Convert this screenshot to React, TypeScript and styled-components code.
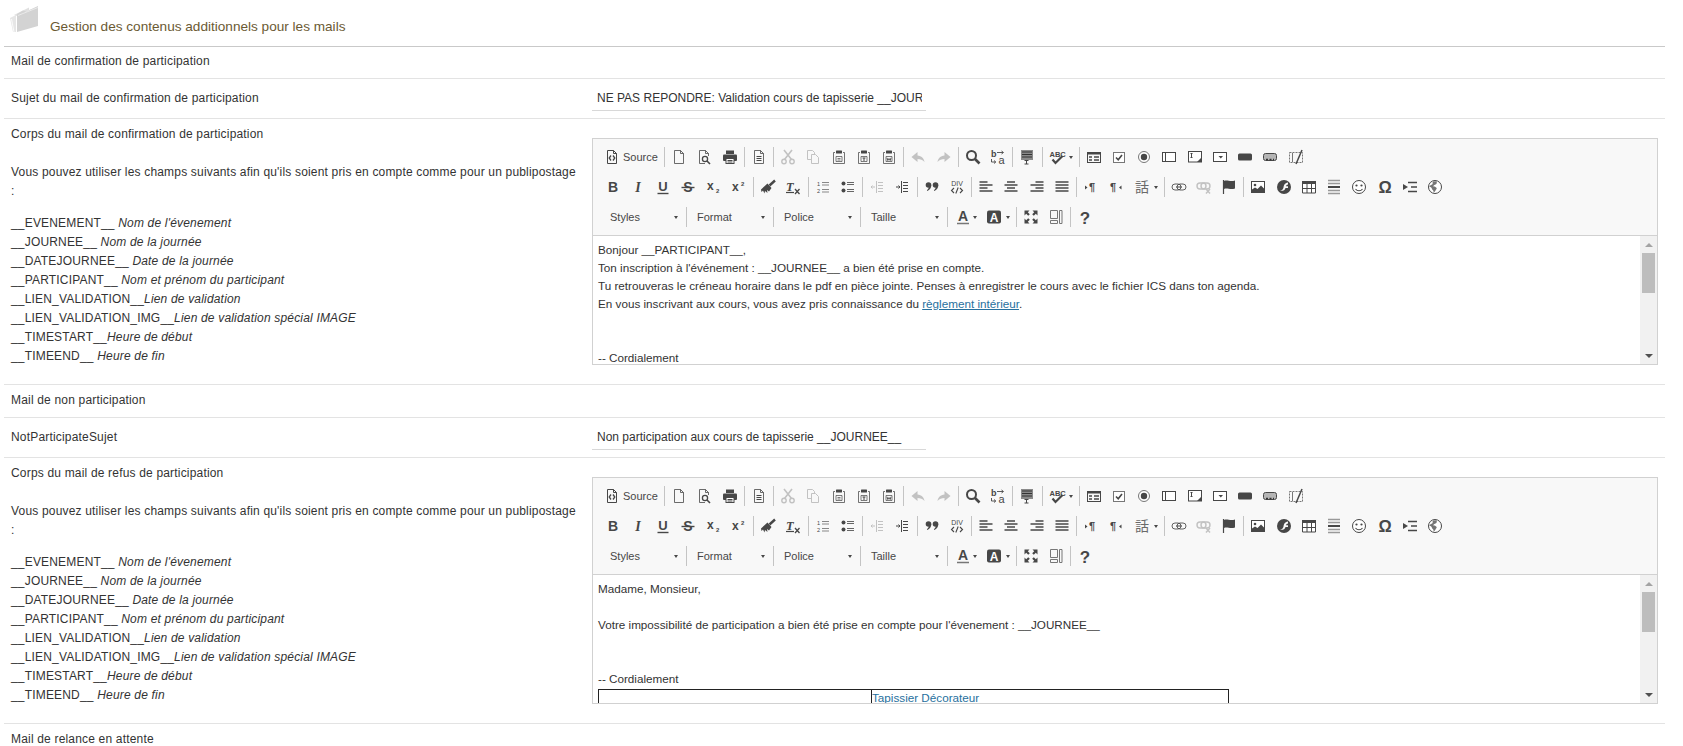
import * as React from 'react';
import styled, { createGlobalStyle } from 'styled-components';

const GlobalStyle = createGlobalStyle`
  html, body {
    margin: 0;
    padding: 0;
    background: #fff;
    overflow: hidden;
  }
  body {
    font-family: "Liberation Sans", Arial, sans-serif;
    font-size: 12px;
    color: #333;
  }
`;

const Page = styled.div`
  height: 746px;
  overflow: hidden;
  padding: 0 18px 0 4px;
`;
const Header = styled.div`
  display: flex;
  align-items: flex-start;
  height: 46px;
  border-bottom: 1px solid #c9c9c9;
`;
const HeaderIcon = styled.svg`
  width: 30px;
  height: 30px;
  margin: 4px 0 0 5px;
  flex: none;
`;
const Title = styled.h1`
  margin: 18px 0 0 11px;
  font-size: 13.6px;
  line-height: 18px;
  font-weight: 400;
  color: #6b5a33;
`;
const SectionRow = styled.div<{ $tall?: boolean }>`
  height: ${({ $tall }) => ($tall ? '32px' : '31px')};
  padding-left: 7px;
  line-height: ${({ $tall }) => ($tall ? '31px' : '29px')};
  letter-spacing: 0.18px;
  border-bottom: 1px solid #e3e3e3;
`;
const FieldRow = styled.div`
  display: grid;
  grid-template-columns: 588px 1fr;
  border-bottom: 1px solid #e3e3e3;
`;
const InlineLabel = styled.div`
  align-self: center;
  padding-left: 7px;
  line-height: 19px;
  letter-spacing: 0.18px;
`;
const InputCell = styled.div`
  padding: 7px 0;
`;
const SubjectInput = styled.input`
  display: block;
  box-sizing: border-box;
  width: 334px;
  height: 25px;
  padding: 0 4px 0 5px;
  border: 0;
  border-bottom: 1px solid #d8d8d8;
  outline: none;
  background: #fff;
  font: 12px "Liberation Sans", Arial, sans-serif;
  color: #333;
`;
const LabelBlock = styled.div`
  padding: 6px 14px 18px 7px;
  line-height: 19px;
  letter-spacing: 0.18px;
`;
const Paragraph = styled.p`
  margin: 19px 0 0;
`;
const TokenList = styled.ul`
  list-style: none;
  margin: 13px 0 0;
  padding: 0;
  color: #333;
`;
const TokenHint = styled.em`
  font-style: italic;
`;
const EditorCell = styled.div`
  padding: 19px 7px 19px 0;
`;
const Editor = styled.div`
  border: 1px solid #d1d1d1;
  height: 225px;
  display: flex;
  flex-direction: column;
`;
const Toolbar = styled.div`
  flex: none;
  box-sizing: border-box;
  height: 97px;
  padding: 3px 0 3px 7px;
  background: #f8f8f8;
  border-bottom: 1px solid #d1d1d1;
`;
const ToolRow = styled.div`
  display: flex;
  align-items: center;
  height: 30px;
  color: #474747;
`;
const ToolButton = styled.div<{ $off?: boolean; $arrow?: boolean }>`
  display: flex;
  align-items: center;
  justify-content: ${({ $arrow }) => ($arrow ? 'flex-start' : 'center')};
  gap: 4px;
  box-sizing: border-box;
  flex: none;
  width: ${({ $arrow }) => ($arrow ? '33px' : '25.25px')};
  padding-left: ${({ $arrow }) => ($arrow ? '5px' : '0')};
  opacity: ${({ $off }) => ($off ? 0.3 : 1)};
`;
const SourceButton = styled.div`
  display: flex;
  align-items: center;
  gap: 3px;
  flex: none;
  box-sizing: border-box;
  width: 62.5px;
  padding-left: 4px;
  font-size: 11px;
`;
const Sep = styled.span<{ $tight?: boolean }>`
  flex: none;
  width: 1px;
  height: 20px;
  margin: ${({ $tight }) => ($tight ? '0' : '0 1.5px')};
  background: #c4c4c4;
`;
const Combo = styled.div`
  display: flex;
  align-items: center;
  justify-content: space-between;
  box-sizing: border-box;
  flex: none;
  width: 86px;
  padding: 0 8px 0 10px;
  font-size: 11px;
`;
const Caret = styled.span`
  flex: none;
  width: 0;
  height: 0;
  border-left: 2.5px solid transparent;
  border-right: 2.5px solid transparent;
  border-top: 3px solid #474747;
`;
const Glyph = styled.svg`
  flex: none;
  display: block;
  width: 16px;
  height: 16px;
  overflow: visible;
  text {
    font-family: "Liberation Sans", Arial, sans-serif;
  }
`;
const EditorBody = styled.div`
  flex: 1;
  min-height: 0;
  display: flex;
`;
const Content = styled.div`
  flex: 1;
  min-width: 0;
  overflow: hidden;
  padding: 5px 0 0 5px;
  font-size: 11.7px;
  line-height: 18px;
`;
const ContentLine = styled.div`
  min-height: 18px;
  white-space: nowrap;
`;
const MailLink = styled.a`
  color: #27709e;
  text-decoration: underline;
`;
const Signature = styled.table`
  border-collapse: collapse;
  width: 631px;
  margin-top: 1px;
  table-layout: fixed;
  td {
    border: 1px solid #222;
    padding: 0;
    height: 40px;
    vertical-align: top;
    line-height: 15px;
  }
  td:first-child {
    width: 272px;
  }
`;
const Scrollbar = styled.div`
  flex: none;
  width: 17px;
  display: flex;
  flex-direction: column;
  background: #f1f1f1;
`;
const ScrollArrow = styled.div<{ $up?: boolean; $muted?: boolean }>`
  flex: none;
  height: 17px;
  display: flex;
  align-items: center;
  justify-content: center;
  margin-top: ${({ $up }) => ($up ? '0' : 'auto')};
  &::before {
    content: '';
    width: 0;
    height: 0;
    border-left: 4px solid transparent;
    border-right: 4px solid transparent;
    ${({ $up, $muted }) =>
      $up
        ? `border-bottom: 4px solid ${$muted ? '#a3a3a3' : '#505050'};`
        : `border-top: 4px solid ${$muted ? '#a3a3a3' : '#505050'};`}
  }
`;
const ScrollThumb = styled.div`
  flex: none;
  height: 40px;
  margin: 0 2px;
  background: #bdbdbd;
`;

const pageDoc = 'M3.5 1.5h6l3 3v10h-9z M9.5 1.5v3h3';
const clip = (
  <>
    <path d="M4 3.5H2.500v11h11v-11H12" fill="none" stroke="currentColor" strokeOpacity="0.75" />
    <rect x="5" y="1.500" width="6" height="3" rx="0.5" fill="currentColor" />
  </>
);

const icons: Record<string, React.ReactNode> = {
  source: (
    <>
      <path d={pageDoc} fill="none" stroke="currentColor" />
      <path d="M7 6.5 5.2 9 7 11.5M9 6.5l1.8 2.5L9 11.5" fill="none" stroke="currentColor" strokeWidth="1.3" />
    </>
  ),
  newpage: <path d={pageDoc} fill="none" stroke="currentColor" strokeOpacity="0.8" />,
  preview: (
    <>
      <path d="M9 14.5H3.5v-13h6l3 3V7 M9.5 1.5v3h3" fill="none" stroke="currentColor" strokeOpacity="0.8" />
      <circle cx="9" cy="10" r="2.6" fill="none" stroke="currentColor" strokeWidth="1.3" />
      <path d="m11 12 3 3" stroke="currentColor" strokeWidth="1.6" />
    </>
  ),
  print: (
    <>
      <rect x="4" y="1.5" width="8" height="3.5" fill="currentColor" />
      <rect x="1" y="5.5" width="14" height="6.5" rx="1" fill="currentColor" />
      <rect x="4" y="9.5" width="8" height="5" fill="#fff" stroke="currentColor" />
      <path d="M5.5 11.5h5M5.5 13h5" stroke="currentColor" />
    </>
  ),
  templates: (
    <>
      <path d={pageDoc} fill="none" stroke="currentColor" strokeOpacity="0.8" />
      <path d="M5.5 7.5h5M5.5 9.5h5M5.5 11.5h5" stroke="currentColor" />
    </>
  ),
  cut: (
    <>
      <path d="M4 1l7.5 9.5M12 1 4.5 10.5" stroke="currentColor" strokeWidth="1.6" />
      <circle cx="4" cy="12.5" r="2.2" fill="none" stroke="currentColor" strokeWidth="1.4" />
      <circle cx="12" cy="12.5" r="2.2" fill="none" stroke="currentColor" strokeWidth="1.4" />
    </>
  ),
  copy: (
    <path d="M6 10.5H2.5v-9h5l2 2v2M6.5 5.5h4l3 3v6h-7z" fill="none" stroke="currentColor" />
  ),
  paste: (
    <>
      {clip}
      <path d="M5 7.500h6v5H5z" fill="none" stroke="currentColor" strokeOpacity="0.7" />
      <path d="M6.500 9.500h3M6.500 11h3" stroke="currentColor" strokeOpacity="0.7" />
    </>
  ),
  pastetext: (
    <>
      {clip}
      <path d="M5 7.500h6v5H5z" fill="none" stroke="currentColor" strokeOpacity="0.7" />
      <path d="M6.500 9h3M8 9v3" stroke="currentColor" />
    </>
  ),
  pasteword: (
    <>
      {clip}
      <path d="M5 7.500h6v5H5z" fill="none" stroke="currentColor" strokeOpacity="0.7" />
      <path d="m6 8.800.8 2.700L8 9.500l1.200 2 .8-2.700" fill="none" stroke="currentColor" strokeWidth="0.9" />
    </>
  ),
  undo: <path d="M7.5 3 1.5 8l6 5v-3c3 0 5 .8 7 3-.5-3.5-3-6.2-7-6.5z" fill="currentColor" />,
  redo: <path d="M8.5 3l6 5-6 5v-3c-3 0-5 .8-7 3 .5-3.5 3-6.2 7-6.5z" fill="currentColor" />,
  find: (
    <>
      <circle cx="6.5" cy="6.5" r="4.5" fill="none" stroke="currentColor" strokeWidth="2" />
      <path d="m10 10 4.5 4.5" stroke="currentColor" strokeWidth="2.6" />
    </>
  ),
  replace: (
    <>
      <text x="1" y="8" fontSize="9" fontWeight="700" fill="currentColor">b</text>
      <text x="8.500" y="15" fontSize="11" fill="currentColor">a</text>
      <path d="M7 3.500h6M11.500 2 13.500 3.500 11.500 5M1.500 10v3h4M4 11.500l1.800 1.500L4 14.500" fill="none" stroke="currentColor" strokeWidth="0.9" />
    </>
  ),
  selectall: (
    <>
      <rect x="2" y="1" width="12" height="10" fill="#8a8a8a" />
      <path d="M3 3h10M3 5.5h10M3 8h10" stroke="#333" />
      <path d="M5.5 11.5h4M7.5 11.5v3.5M5.5 15h4" stroke="currentColor" />
    </>
  ),
  spell: (
    <>
      <text x="0.500" y="7.500" fontSize="7.500" fontWeight="700" fill="currentColor">ABC</text>
      <path d="m3.500 10.500 3 3.500 7-7" fill="none" stroke="currentColor" strokeWidth="2.200" />
    </>
  ),
  form: (
    <>
      <rect x="1.5" y="3.5" width="13" height="10" fill="none" stroke="currentColor" />
      <rect x="1.5" y="3.5" width="13" height="2" fill="currentColor" />
      <path d="M3 8h3M3 11h3M8 8h5M8 11h5" stroke="currentColor" strokeWidth="1.4" />
    </>
  ),
  checkbox: (
    <>
      <rect x="2.5" y="3.5" width="11" height="10" fill="#fff" stroke="#777" />
      <path d="m5 8.5 2.2 2.2L11 6" fill="none" stroke="currentColor" strokeWidth="1.6" />
    </>
  ),
  radio: (
    <>
      <circle cx="8" cy="8" r="5.5" fill="#fff" stroke="#777" />
      <circle cx="8" cy="8" r="3.2" fill="currentColor" />
    </>
  ),
  textfield: (
    <>
      <rect x="1.5" y="3.5" width="13" height="9" fill="#fff" stroke="currentColor" />
      <path d="M4.5 4v8" stroke="currentColor" />
    </>
  ),
  textarea: (
    <>
      <rect x="1.5" y="2.5" width="13" height="10.5" fill="#fff" stroke="currentColor" />
      <path d="M10 13l4.5-4.5V13z" fill="currentColor" />
      <path d="M3.5 4.5h2M4.5 4.5v4M3.5 8.5h2" stroke="currentColor" />
    </>
  ),
  select: (
    <>
      <rect x="1.5" y="3.5" width="13" height="9" fill="#fff" stroke="currentColor" />
      <path d="M6.5 7h4.5l-2.2 2.6z" fill="currentColor" />
    </>
  ),
  button: <rect x="1" y="4.5" width="14" height="7" rx="1.5" fill="currentColor" />,
  imagebutton: (
    <>
      <rect x="1.5" y="4.5" width="13" height="7" rx="2" fill="#b5b5b5" stroke="currentColor" />
      <path d="M4 10.500h8" stroke="#333" strokeDasharray="2 1.500" strokeWidth="1.500" />
    </>
  ),
  hidden: (
    <>
      <rect x="1.5" y="3.5" width="13" height="10" fill="none" stroke="#777" strokeDasharray="2 1" />
      <path d="M4.5 4v9" stroke="#777" />
      <path d="M14 1 8 15" stroke="currentColor" strokeWidth="1.5" />
    </>
  ),
  bold: <text x="8" y="13" textAnchor="middle" fontSize="14" fontWeight="700" fill="currentColor">B</text>,
  italic: (
    <text x="8" y="13" textAnchor="middle" fontSize="14" fontWeight="700" fontStyle="italic" fill="currentColor" style={{ fontFamily: '"Liberation Serif", serif' }}>I</text>
  ),
  underline: (
    <>
      <text x="8" y="12" textAnchor="middle" fontSize="13" fontWeight="700" fill="currentColor">U</text>
      <path d="M2.5 14.5h11" stroke="currentColor" strokeWidth="1.4" />
    </>
  ),
  strike: (
    <>
      <text x="8" y="13" textAnchor="middle" fontSize="14" fontWeight="700" fill="currentColor">S</text>
      <path d="M1.5 8.5h13" stroke="currentColor" strokeWidth="1.4" />
    </>
  ),
  sub: (
    <>
      <text x="1" y="11" fontSize="12" fontWeight="700" fill="currentColor">x</text>
      <text x="10" y="14" fontSize="6" fontWeight="700" fill="currentColor">2</text>
    </>
  ),
  sup: (
    <>
      <text x="1" y="12" fontSize="12" fontWeight="700" fill="currentColor">x</text>
      <text x="10" y="6.5" fontSize="6" fontWeight="700" fill="currentColor">2</text>
    </>
  ),
  brush: (
    <>
      <path d="m15 1.5-5.5 5" stroke="currentColor" strokeWidth="2.4" />
      <path d="M7.5 4.5 11.5 9 9 12.5 7 11l.5 3L5 12l-.5 2.5L3 11.5 1.5 13 1 10.5z" fill="currentColor" />
    </>
  ),
  removeformat: (
    <>
      <text x="1" y="11.5" fontSize="12.5" fontWeight="700" fontStyle="italic" fill="currentColor" style={{ fontFamily: '"Liberation Serif", serif' }}>T</text>
      <path d="M1 13.5h8" stroke="currentColor" strokeWidth="1.2" />
      <path d="m10 10 4.5 5M14.5 10 10 15" stroke="currentColor" strokeWidth="1.3" />
    </>
  ),
  ol: (
    <>
      <text x="2" y="7" fontSize="5.5" fill="currentColor">1</text>
      <text x="2" y="14" fontSize="5.5" fill="currentColor">2</text>
      <path d="M7 3.5h7M7 6h7M7 10.5h7M7 13h7" stroke="#888" strokeWidth="1.2" />
    </>
  ),
  ul: (
    <>
      <circle cx="3.5" cy="4.5" r="2" fill="currentColor" />
      <circle cx="3.5" cy="11.5" r="2" fill="currentColor" />
      <path d="M7 3.5h7M7 5.5h7M7 10.5h7M7 12.5h7" stroke="#666" strokeWidth="1.1" />
    </>
  ),
  outdent: (
    <>
      <path d="M7.5 2v12" stroke="currentColor" />
      <path d="M2 8h4M3.5 6.5 2 8l1.5 1.5" fill="none" stroke="currentColor" />
      <path d="M9 3.5h5M9 6.5h5M9 9.5h5M9 12.5h5" stroke="currentColor" />
    </>
  ),
  indent: (
    <>
      <path d="M7.5 2v12" stroke="currentColor" />
      <path d="M2 8h4M4.5 6.5 6 8l-1.5 1.5" fill="none" stroke="currentColor" />
      <path d="M9 3.5h5M9 6.5h5M9 9.5h5M9 12.5h5" stroke="currentColor" />
    </>
  ),
  quote: (
    <>
      <circle cx="4.5" cy="6" r="2.8" fill="currentColor" />
      <path d="M7.3 6c0 3-1.5 5-4 6l-.4-.8C4.4 10 5 8.500 5 7z" fill="currentColor" />
      <circle cx="11.5" cy="6" r="2.8" fill="currentColor" />
      <path d="M14.300 6c0 3-1.500 5-4 6l-.4-.8c1.500-1.200 2.100-2.700 2.100-4.200z" fill="currentColor" />
    </>
  ),
  div: (
    <>
      <text x="8" y="7" textAnchor="middle" fontSize="7" fill="currentColor">DIV</text>
      <path d="M5 9 2.500 11.500 5 14M11 9l2.500 2.500L11 14M9.200 8.500 6.800 14.500" fill="none" stroke="currentColor" strokeWidth="1.1" />
    </>
  ),
  left: <path d="M1.500 3h8M1.500 6h13M1.500 9h8M1.500 12h13" stroke="currentColor" strokeWidth="1.500" />,
  center: <path d="M4 3h8M1.500 6h13M4 9h8M1.500 12h13" stroke="currentColor" strokeWidth="1.500" />,
  right: <path d="M6.500 3h8M1.500 6h13M6.500 9h8M1.500 12h13" stroke="currentColor" strokeWidth="1.500" />,
  justify: <path d="M1.500 3h13M1.500 6h13M1.500 9h13M1.500 12h13" stroke="currentColor" strokeWidth="1.500" />,
  ltr: (
    <>
      <text x="6" y="12" fontSize="11" fontWeight="700" fill="currentColor">¶</text>
      <path d="m2 6.500 2.500 2-2.500 2z" fill="currentColor" />
    </>
  ),
  rtl: (
    <>
      <text x="2" y="12" fontSize="11" fontWeight="700" fill="currentColor">¶</text>
      <path d="m13.500 6.500-2.500 2 2.500 2z" fill="currentColor" />
    </>
  ),
  lang: (
    <text x="8" y="13" textAnchor="middle" fontSize="14" fill="#6a6a6a" style={{ fontFamily: '"Noto Sans CJK JP", sans-serif' }}>話</text>
  ),
  link: (
    <>
      <rect x="1" y="5" width="9" height="6" rx="3" fill="none" stroke="currentColor" strokeOpacity="0.85" />
      <rect x="6" y="5" width="9" height="6" rx="3" fill="none" stroke="currentColor" strokeOpacity="0.85" />
      <path d="M5 8h6" stroke="currentColor" />
    </>
  ),
  unlink: (
    <>
      <rect x="1" y="4" width="9" height="6" rx="3" fill="none" stroke="currentColor" strokeWidth="1.400" />
      <rect x="5" y="4" width="9" height="6" rx="3" fill="none" stroke="currentColor" strokeWidth="1.400" />
      <path d="m10 10 4 4.500M14 10l-4 4.500" stroke="currentColor" strokeWidth="1.400" />
    </>
  ),
  anchor: (
    <>
      <path d="M2.500 1v14" stroke="currentColor" strokeWidth="1.200" />
      <path d="M3 2c3-1.500 6 1 11-.5v8c-5 1.500-8-1-11 .5z" fill="currentColor" />
    </>
  ),
  image: (
    <>
      <rect x="1.500" y="2.500" width="13" height="11" fill="#fff" stroke="currentColor" />
      <circle cx="5" cy="6" r="1.300" fill="currentColor" />
      <path d="M2 13v-2.500l3-2 2.500 1.500 3.500-3.500 3 3V13z" fill="currentColor" />
    </>
  ),
  flash: (
    <>
      <circle cx="8" cy="8" r="7" fill="currentColor" />
      <path d="M12 3.500C8.500 4 8 6 7.500 8.500 7 10.500 6 11.500 4 12c3.500.2 5-1 5.500-3H12V7.300H10c.3-1 1-1.500 2-1.700z" fill="#f8f8f8" />
    </>
  ),
  table: (
    <>
      <rect x="1" y="2" width="14" height="12" fill="#fff" stroke="none" />
      <rect x="1" y="2" width="14" height="3" fill="currentColor" />
      <path d="M1.500 2v12h13V2M1.500 9.500h13M6 5v9M10.500 5v9" fill="none" stroke="currentColor" />
    </>
  ),
  hr: (
    <>
      <path d="M2 1.500h12M2 4.500h12M2 11.500h12M2 14.500h12" stroke="#999" strokeWidth="1.500" />
      <path d="M2 8h12" stroke="currentColor" strokeWidth="2" />
    </>
  ),
  smiley: (
    <>
      <circle cx="8" cy="8" r="6.500" fill="#fff" stroke="currentColor" />
      <circle cx="5.500" cy="6.500" r="1.100" fill="currentColor" />
      <circle cx="10.500" cy="6.500" r="1.100" fill="currentColor" />
      <path d="M4.500 10c1.800 2.300 5.200 2.300 7 0" fill="none" stroke="currentColor" strokeWidth="1.100" />
    </>
  ),
  omega: <text x="8" y="14" textAnchor="middle" fontSize="16.500" fontWeight="700" fill="currentColor">Ω</text>,
  pagebreak: (
    <>
      <path d="M6 3.500h9M6 12.500h9M9 8h6" stroke="currentColor" strokeWidth="1.600" />
      <path d="M1 5l5 3-5 3z" fill="currentColor" />
    </>
  ),
  iframe: (
    <>
      <circle cx="8" cy="8" r="6.500" fill="#fff" stroke="currentColor" />
      <path d="M6 2.500c-1 1.500.5 2-1 3S2.500 6 2.500 8c1.500 0 2 .5 2.500 2s2 1 1.500 3.500c2-.5 2-3 3-3.500s-1-2.500-2.500-2.500S7 6 8.500 5.500 10 3 9.500 2.200z" fill="currentColor" fillOpacity="0.75" />
    </>
  ),
  textcolor: (
    <>
      <text x="10" y="12" textAnchor="middle" fontSize="14" fontWeight="700" fill="currentColor">A</text>
      <path d="M4 14.500h12" stroke="#777" strokeWidth="1.500" />
    </>
  ),
  bgcolor: (
    <>
      <rect x="1" y="1.500" width="14" height="13" rx="2" fill="currentColor" />
      <text x="8" y="12.500" textAnchor="middle" fontSize="12" fontWeight="700" fill="#fff">A</text>
    </>
  ),
  maximize: (
    <path d="M1.500 1.500h5l-1.700 1.700 2 2-1.600 1.600-2-2L1.500 6.500zM14.500 1.500v5l-1.700-1.700-2 2-1.600-1.600 2-2L9.500 1.500zM1.500 14.500v-5l1.700 1.700 2-2 1.600 1.600-2 2 1.700 1.700zM14.500 14.500h-5l1.700-1.700-2-2 1.600-1.600 2 2 1.700-1.700z" fill="currentColor" />
  ),
  blocks: (
    <>
      <path d="M2.500 1.500h7v8h-7zM2.500 11.500h7v3h-7zM11.500 1.500h2.500v13h-2.500z" fill="none" stroke="#777" />
    </>
  ),
  about: <text x="8" y="14.500" textAnchor="middle" fontSize="17" fontWeight="700" fill="currentColor">?</text>,
};

const Icon: React.FC<{ name: string }> = ({ name }) => (
  <Glyph viewBox="0 0 16 16">{icons[name]}</Glyph>
);

type Tool = { name: string; off?: boolean; arrow?: boolean };
const t = (name: string, off?: boolean): Tool => ({ name, off });
const ta = (name: string): Tool => ({ name, arrow: true });

const firstRow: Tool[][] = [
  [t('newpage'), t('preview'), t('print')],
  [t('templates')],
  [t('cut', true), t('copy', true), t('paste'), t('pastetext'), t('pasteword')],
  [t('undo', true), t('redo', true)],
  [t('find'), t('replace')],
  [t('selectall')],
  [ta('spell')],
  [
    t('form'),
    t('checkbox'),
    t('radio'),
    t('textfield'),
    t('textarea'),
    t('select'),
    t('button'),
    t('imagebutton'),
    t('hidden'),
  ],
];
const secondRow: Tool[][] = [
  [t('bold'), t('italic'), t('underline'), t('strike'), t('sub'), t('sup')],
  [t('brush'), t('removeformat')],
  [t('ol'), t('ul')],
  [t('outdent', true), t('indent')],
  [t('quote'), t('div')],
  [t('left'), t('center'), t('right'), t('justify')],
  [t('ltr'), t('rtl'), ta('lang')],
  [t('link'), t('unlink', true), t('anchor')],
  [
    t('image'),
    t('flash'),
    t('table'),
    t('hr'),
    t('smiley'),
    t('omega'),
    t('pagebreak'),
    t('iframe'),
  ],
];
const thirdRow: Tool[][] = [
  [ta('textcolor'), ta('bgcolor')],
  [t('maximize'), t('blocks')],
  [t('about')],
];
const combos = ['Styles', 'Format', 'Police', 'Taille'];

const ToolGroups: React.FC<{ groups: Tool[][]; leadingSep?: boolean }> = ({
  groups,
  leadingSep,
}) => (
  <>
    {groups.map((group, i) => (
      <React.Fragment key={i}>
        {(i > 0 || leadingSep) && <Sep />}
        {group.map((tool) => (
          <ToolButton key={tool.name} $off={tool.off} $arrow={tool.arrow}>
            <Icon name={tool.name} />
            {tool.arrow && <Caret />}
          </ToolButton>
        ))}
      </React.Fragment>
    ))}
  </>
);

const EditorToolbar: React.FC = () => (
  <Toolbar>
    <ToolRow>
      <SourceButton>
        <Icon name="source" />
        Source
      </SourceButton>
      <ToolGroups groups={firstRow} leadingSep />
    </ToolRow>
    <ToolRow>
      <ToolGroups groups={secondRow} />
    </ToolRow>
    <ToolRow>
      {combos.map((name) => (
        <React.Fragment key={name}>
          <Combo>
            {name}
            <Caret />
          </Combo>
          <Sep $tight />
        </React.Fragment>
      ))}
      <ToolGroups groups={thirdRow} />
    </ToolRow>
  </Toolbar>
);

const tokens = [
  ['__EVENEMENT__ ', "Nom de l'évenement"],
  ['__JOURNEE__ ', 'Nom de la journée'],
  ['__DATEJOURNEE__ ', 'Date de la journée'],
  ['__PARTICIPANT__ ', 'Nom et prénom du participant'],
  ['__LIEN_VALIDATION__', 'Lien de validation'],
  ['__LIEN_VALIDATION_IMG__', 'Lien de validation spécial IMAGE'],
  ['__TIMESTART__', 'Heure de début'],
  ['__TIMEEND__ ', 'Heure de fin'],
];

const BodyRow: React.FC<{ label: string; children: React.ReactNode }> = ({
  label,
  children,
}) => (
  <FieldRow>
    <LabelBlock>
      {label}
      <Paragraph>
        Vous pouvez utiliser les champs suivants afin qu'ils soient pris en
        compte comme pour un publipostage :
      </Paragraph>
      <TokenList>
        {tokens.map(([token, hint]) => (
          <li key={token}>
            {token}
            <TokenHint>{hint}</TokenHint>
          </li>
        ))}
      </TokenList>
    </LabelBlock>
    <EditorCell>
      <Editor>
        <EditorToolbar />
        <EditorBody>
          <Content>{children}</Content>
          <Scrollbar>
            <ScrollArrow $up $muted />
            <ScrollThumb />
            <ScrollArrow />
          </Scrollbar>
        </EditorBody>
      </Editor>
    </EditorCell>
  </FieldRow>
);

const SubjectRow: React.FC<{ label: string; value: string }> = ({ label, value }) => (
  <FieldRow>
    <InlineLabel>{label}</InlineLabel>
    <InputCell>
      <SubjectInput readOnly value={value} />
    </InputCell>
  </FieldRow>
);

const App: React.FC = () => (
  <>
    <GlobalStyle />
    <Page>
      <Header>
        <HeaderIcon viewBox="0 0 30 30">
          <path d="M1 14 7 11v17H4z" fill="#e6e6e6" />
          <path d="M2.500 15 5 28" stroke="#fff" strokeWidth="0.8" />
          <path d="M5 11 20 3.500V6L8 12z" fill="#e0e0e0" />
          <path d="M8 10 14 6.500 17 7.500 29 2v20L8 28z" fill="#d3d3d3" />
          <path d="M9 11.500 29 3.500" stroke="#f2f2f2" strokeWidth="0.7" />
        </HeaderIcon>
        <Title>Gestion des contenus additionnels pour les mails</Title>
      </Header>

      <SectionRow>Mail de confirmation de participation</SectionRow>
      <SubjectRow
        label="Sujet du mail de confirmation de participation"
        value="NE PAS REPONDRE: Validation cours de tapisserie __JOURNEE__"
      />
      <BodyRow label="Corps du mail de confirmation de participation">
        <ContentLine>Bonjour __PARTICIPANT__,</ContentLine>
        <ContentLine>Ton inscription à l'événement : __JOURNEE__ a bien été prise en compte.</ContentLine>
        <ContentLine>
          Tu retrouveras le créneau horaire dans le pdf en pièce jointe. Penses à enregistrer le cours avec le fichier ICS dans ton agenda.
        </ContentLine>
        <ContentLine>
          En vous inscrivant aux cours, vous avez pris connaissance du{' '}
          <MailLink href="#">règlement intérieur</MailLink>.
        </ContentLine>
        <ContentLine />
        <ContentLine />
        <ContentLine>-- Cordialement</ContentLine>
      </BodyRow>

      <SectionRow $tall>Mail de non participation</SectionRow>
      <SubjectRow
        label="NotParticipateSujet"
        value="Non participation aux cours de tapisserie __JOURNEE__"
      />
      <BodyRow label="Corps du mail de refus de participation">
        <ContentLine>Madame, Monsieur,</ContentLine>
        <ContentLine />
        <ContentLine>
          Votre impossibilité de participation a bien été prise en compte pour l'évenement : __JOURNEE__
        </ContentLine>
        <ContentLine />
        <ContentLine />
        <ContentLine>-- Cordialement</ContentLine>
        <Signature>
          <tbody>
            <tr>
              <td />
              <td>
                <MailLink href="#">Tapissier Décorateur</MailLink>
              </td>
            </tr>
          </tbody>
        </Signature>
      </BodyRow>

      <SectionRow $tall>Mail de relance en attente</SectionRow>
    </Page>
  </>
);

export default App;
